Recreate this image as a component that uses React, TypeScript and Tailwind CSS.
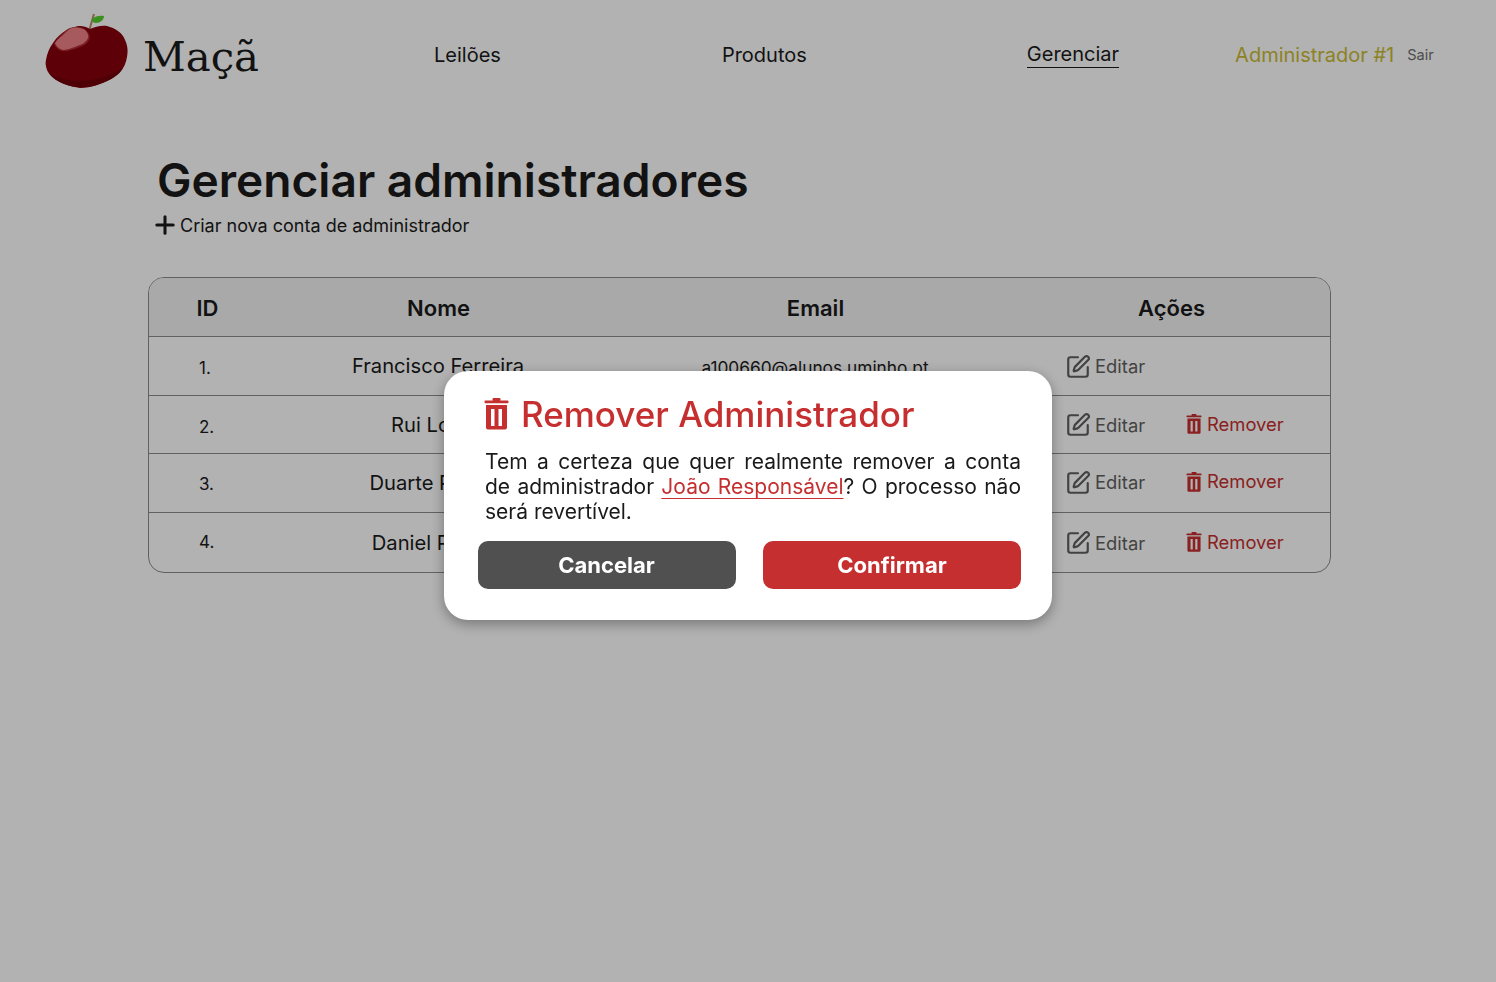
import { Plus, SquarePen } from "lucide-react";

const admins = [
	{ id: "1.", name: "Francisco Ferreira", email: "a100660@alunos.uminho.pt", canRemove: false, h: "h-[59px]", idPad: "pt-[6px]", namePad: "", actionPad: "pt-[2px]" },
	{ id: "2.", name: "Rui Lopes", email: "a100643@alunos.uminho.pt", canRemove: true, h: "h-[58px]", idPad: "pt-[6px]", namePad: "pt-[2px]", actionPad: "pt-[2px]" },
	{ id: "3.", name: "Duarte Pereira", email: "a100642@alunos.uminho.pt", canRemove: true, h: "h-[59px]", idPad: "pt-1", namePad: "", actionPad: "" },
	{ id: "4.", name: "Daniel Pereira", email: "a100545@alunos.uminho.pt", canRemove: true, h: "h-[60px]", idPad: "pt-0", namePad: "pt-[2px]", actionPad: "pt-[2px]" },
];

function TrashIcon({ className }: { className: string }) {
	return (
		<svg viewBox="0 0 24 32" className={className} fill="currentColor">
			<rect x="8" y="0" width="8" height="3" rx="1" />
			<rect x="0" y="2.4" width="24" height="2.8" rx="1" />
			<path
				fillRule="evenodd"
				d="M1.5 7h21v22.5a2 2 0 0 1-2 2h-17a2 2 0 0 1-2-2zM6.5 11v17h3.5V11zM14 11v17h3.5V11z"
			/>
		</svg>
	);
}

function Logo() {
	return (
		<svg viewBox="0 0 84 76" className="h-[76px] w-[84px]">
			<path d="M49 1 L44 18" stroke="#b98b68" strokeWidth="2" fill="none" />
			<path d="M47 6 C50 3 55 2 59 3 C59 7 55 10 51 10 C49 10 47 9 47 6 Z" fill="#54d02c" />
			<path
				d="M45 16 C50 14 56 12 62 13 C70 15 78 20 80 27 C83 33 83 39 82 44 C81 50 79 55 75 59 C68 66 60 69 52 72 C46 74 41 75 35 75 C28 74 21 72 15 69 C9 66 4 62 2 57 C1 54 0 50 1 47 C2 41 4 35 8 30 C12 24 16 20 22 17 C28 14 32 13 35 13 C38 13 42 14 45 16 Z"
				fill="#86000c"
			/>
			<path
				d="M25 15 C32 13 38 14 41 17 C44 20 46 24 44 27 C42 31 38 33 35 34 C29 36 23 39 17 38 C13 37 10 34 9 31 C11 27 14 24 17 21 C20 18 22 16 25 15 Z"
				fill="#b02a33"
			/>
			<path
				d="M27 15 C32 14 37 15 40 17 C42 19 44 22 43 25 C42 28 38 31 35 32 C29 34 23 37 18 37 C14 36 11 33 10 30 C12 27 15 24 18 22 C21 19 24 16 27 15 Z"
				fill="#f08286"
			/>
			<path d="M4 60 C20 70 50 72 78 55 C74 63 64 68 52 72 C36 77 14 74 4 60 Z" fill="#70000a" />
		</svg>
	);
}

function AdminRow({ admin }: { admin: (typeof admins)[number] }) {
	return (
		<div className={`grid grid-cols-[118px_344px_410px_1fr] items-center border-t border-[#8c8c8c] ${admin.h}`}>
			<div className={`pl-[50px] text-[17px] text-[#1a1a1a] ${admin.idPad}`}>{admin.id}</div>
			<div className={`pr-[2px] text-center text-[20.2px] text-[#1a1a1a] ${admin.namePad}`}>{admin.name}</div>
			<div className="pr-[2px] pt-[3px] text-center text-[17.3px] text-[#1a1a1a]">{admin.email}</div>
			<div className={`flex items-center pl-[44px] text-[18.4px] ${admin.actionPad}`}>
				<div className="flex w-[121px] items-center gap-[4px] text-[#5f5f5f]">
					<SquarePen className="h-[26px] w-[26px]" strokeWidth={2} />
					<span>Editar</span>
				</div>
				{admin.canRemove && (
					<div className="-mt-[2px] flex items-center gap-[5px] text-[#c62f2f]">
						<TrashIcon className="h-[20px] w-[16px]" />
						<span>Remover</span>
					</div>
				)}
			</div>
		</div>
	);
}

export default function App() {
	return (
		<div className="relative min-h-[982px] bg-white font-['Inter',sans-serif]">
			<header className="flex h-[100px] items-start">
				<div className="flex w-[340px] items-center pl-[45px] pt-[13px]">
					<Logo />
					<span className="ml-[14px] pt-[12px] font-['DejaVu_Serif',serif] text-[41.8px] text-[#1a1a1a]">Maçã</span>
				</div>
				<nav className="flex items-center pt-[40px] text-[20px] text-[#1a1a1a]">
					<a className="ml-[94px]">Leilões</a>
					<a className="ml-[221px]">Produtos</a>
					<a className="ml-[220px] border-b border-[#1a1a1a] leading-[25px]">Gerenciar</a>
					<span className="ml-[116px] text-[#c9bb33]">Administrador #1</span>
					<span className="-mt-px ml-[13px] text-[14.5px] text-[#6e6e6e]">Sair</span>
				</nav>
			</header>

			<main className="pl-[148px]">
				<h1 className="ml-[9px] mt-[50px] text-[46.1px] font-semibold leading-[60px] text-[#1a1a1a]">
					Gerenciar administradores
				</h1>
				<div className="ml-[3px] flex h-[30px] items-center gap-[1px] text-[18px] text-[#1a1a1a]">
					<Plus className="h-[28px] w-[28px]" strokeWidth={2.6} />
					<span>Criar nova conta de administrador</span>
				</div>

				<div className="mt-[37px] w-[1183px] overflow-hidden rounded-[16px] border border-[#8c8c8c]">
					<div className="grid h-[58px] grid-cols-[118px_344px_410px_1fr] items-center bg-[#f2f2f2] pt-[2px] text-[22px] font-semibold text-[#1a1a1a]">
						<div className="pr-[1px] text-center">ID</div>
						<div className="pr-[1px] pt-[1px] text-center">Nome</div>
						<div className="pr-[1px] text-center">Email</div>
						<div className="pr-[8px] text-center">Ações</div>
					</div>
					{admins.map((admin) => (
						<AdminRow key={admin.id} admin={admin} />
					))}
				</div>
			</main>

			<div className="fixed inset-0 flex justify-center bg-black/30 pt-[371px]">
				<div className="h-[249px] w-[608px] rounded-[24px] bg-white pl-[34px] pr-[31px] shadow-[0_4px_14px_rgba(0,0,0,0.35)]">
					<div className="flex items-center gap-[12px] pl-[6px] pt-[21px] text-[#c62f2f]">
						<TrashIcon className="h-[32px] w-[25px]" />
						<span className="text-[35px] font-medium leading-[44px]">Remover Administrador</span>
					</div>
					<p className="mt-[13px] pl-[7px] text-justify text-[21px] leading-[25px] text-[#1a1a1a]">
						Tem a certeza que quer realmente remover a conta de administrador{" "}
						<span className="text-[#c62f2f] underline decoration-1 underline-offset-[4px]">João Responsável</span>? O
						processo não será revertível.
					</p>
					<div className="mt-[17px] flex justify-between">
						<button className="h-[48px] w-[258px] rounded-[10px] bg-[#505050] pr-[1px] text-[22px] font-bold text-white">
							Cancelar
						</button>
						<button className="h-[48px] w-[258px] rounded-[10px] bg-[#c62f2f] text-[22px] font-bold text-white">
							Confirmar
						</button>
					</div>
				</div>
			</div>
		</div>
	);
}
